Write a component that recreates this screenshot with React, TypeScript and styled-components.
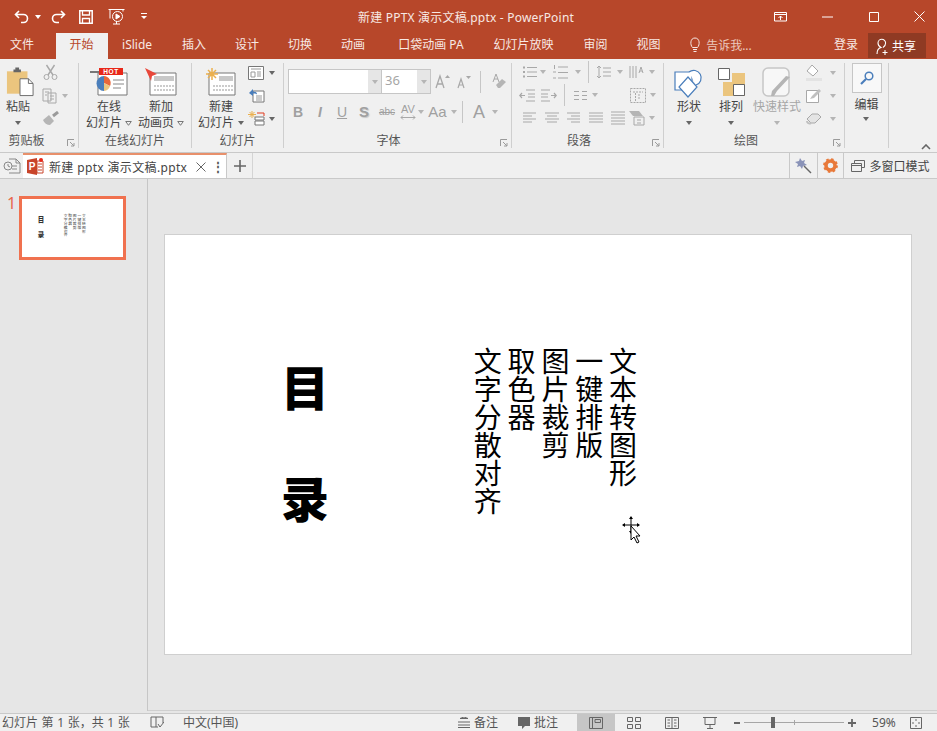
import React from "react";
import styled, { createGlobalStyle } from "styled-components";

const Global = createGlobalStyle`
  html, body { margin: 0; padding: 0; background: #e6e6e6; }
  body { font-family: "Noto Sans", "Noto Sans CJK SC", sans-serif; font-size: 12px; color: #444; overflow: hidden; }
  * { box-sizing: border-box; }
  svg { display: block; flex: none; }
`;

const Frame = styled.div`
  width: 937px; height: 731px; display: flex; flex-direction: column; overflow: hidden;
`;
const TitleBar = styled.div`
  height: 33px; background: #b7472a; display: flex; align-items: center; color: #fff; flex: none;
`;
const Qat = styled.div`
  width: 358px; display: flex; align-items: center; padding-left: 14px;
`;
const QatSlot = styled.div<{ $w: number }>`
  width: ${p => p.$w}px; display: flex; align-items: center;
`;
const DocTitle = styled.div`
  font-size: 12px; color: #f7e9e4; white-space: nowrap; letter-spacing: 0.2px;
`;
const WinControls = styled.div`
  margin-left: auto; display: flex; align-items: center; padding-right: 12px; gap: 35.5px;
`;
const TabBar = styled.div`
  height: 26px; background: #b7472a; display: flex; align-items: flex-start; flex: none; color: #f7e9e4;
`;
const Tab = styled.div<{ $active?: boolean; $first?: boolean; $ml?: number }>`
  height: 26px; line-height: 23px; white-space: nowrap;
  padding: ${p => (p.$active ? "0 14px 0 13.5px" : "0 14.5px")};
  margin-left: ${p => (p.$first ? "-4.5px" : p.$active ? "7.5px" : `${p.$ml ?? 0}px`)};
  background: ${p => (p.$active ? "#f0f0f0" : "transparent")};
  color: ${p => (p.$active ? "#b7472a" : "#f7e9e4")};
`;
const TellMe = styled.div`
  display: flex; align-items: center; gap: 5px; height: 23px; margin-left: 14px; color: #ecc9bd;
`;
const SignIn = styled.div`
  margin-left: auto; line-height: 23px; color: #f7e9e4;
`;
const Share = styled.div`
  width: 58px; height: 25px; margin: 0 11px 0 10px; background: #8f3a23; display: flex; align-items: center; gap: 2px; padding-left: 6px; color: #fff;
`;
const Ribbon = styled.div`
  height: 94px; background: #f0f0f0; border-bottom: 1px solid #c9c9c9; display: flex; flex: none; position: relative;
`;
const Group = styled.div<{ $w: number }>`
  width: ${p => p.$w}px; flex: none; margin: 4px 0; display: flex; flex-direction: column;
  border-right: 1px solid #cfcfcf; position: relative;
`;
const GroupBody = styled.div<{ $pl?: number }>`
  height: 72px; display: flex; padding-left: ${p => p.$pl ?? 0}px;
`;
const GroupLabel = styled.div<{ $pr?: number }>`
  flex: 1; text-align: center; line-height: 14px; padding-top: 1px; padding-right: ${p => p.$pr ?? 0}px; color: #555;
`;
const Launcher = styled.div`
  position: absolute; right: 3px; bottom: 1px;
`;
const Big = styled.div<{ $w: number; $off?: boolean }>`
  width: ${p => p.$w}px; flex: none; display: flex; flex-direction: column; align-items: center;
  color: ${p => (p.$off ? "#a6a6a6" : "#444")}; line-height: 16px; padding-top: 2px;
`;
const BigIcon = styled.div`
  height: 34px; display: flex; align-items: center; justify-content: center;
`;
const BigLine = styled.div`
  display: flex; align-items: center; gap: 3px; white-space: nowrap; height: 16px;
`;
const Caret = styled.span<{ $off?: boolean; $light?: boolean; $ml?: number }>`
  display: inline-block; width: 0; height: 0; flex: none; margin-left: ${p => p.$ml ?? 0}px;
  border-left: 3px solid transparent; border-right: 3px solid transparent;
  border-top: 4px solid ${p => (p.$light ? "#fff" : p.$off ? "#b5b5b5" : "#666")};
`;
const CaretRow = styled.div<{ $h?: number }>`
  height: ${p => p.$h ?? 16}px; display: flex; align-items: center; justify-content: center;
`;
const SmallCol = styled.div<{ $w: number }>`
  width: ${p => p.$w}px; flex: none; display: flex; flex-direction: column; gap: 4px;
`;
const SmallBtn = styled.div<{ $pl?: number }>`
  height: 19px; display: flex; align-items: center; gap: 4px; padding-left: ${p => p.$pl ?? 0}px;
`;
const RowStack = styled.div<{ $pl: number; $pt: number }>`
  height: 72px; display: flex; flex-direction: column; padding: ${p => p.$pt}px 0 0 ${p => p.$pl}px;
`;
const FontRow = styled.div<{ $h: number; $pt?: number }>`
  height: ${p => p.$h}px; display: flex; align-items: center; padding-top: ${p => p.$pt ?? 0}px;
`;
const Combo = styled.div<{ $w: number }>`
  width: ${p => p.$w}px; height: 23px; background: #fff; display: flex; justify-content: flex-end; color: #a6a6a6;
  font-size: 13px; line-height: 21px; padding-left: 3px;
`;
const ComboGroup = styled.div`
  display: flex; border: 1px solid #c6c6c6; background: #c6c6c6; gap: 1px;
`;
const ComboText = styled.span`
  flex: 1;
`;
const ComboArrow = styled.div`
  width: 13px; background: #e6e6e6; display: flex; align-items: center; justify-content: center;
`;
const Glyph = styled.div<{ $w: number; $size?: number; $b?: boolean; $i?: boolean; $u?: boolean; $shadow?: boolean }>`
  width: ${p => p.$w}px; text-align: center; color: #a0a0a0; flex: none; font-family: "Liberation Sans", sans-serif;
  font-size: ${p => p.$size ?? 13}px; font-weight: ${p => (p.$b ? 700 : 400)};
  font-style: ${p => (p.$i ? "italic" : "normal")}; text-decoration: ${p => (p.$u ? "underline" : "none")}; line-height: 16px;
  text-shadow: ${p => (p.$shadow ? "1px 1px 1px #c8c8c8" : "none")};
`;
const GlyphStack = styled.div`
  width: 20px; flex: none; display: flex; flex-direction: column; align-items: center; color: #a0a0a0;
  font: 400 11px/11px "Liberation Sans", sans-serif;
`;
const VSep = styled.div<{ $h: number; $mx: number }>`
  width: 1px; height: ${p => p.$h}px; background: #c6c6c6; margin: 0 ${p => p.$mx}px; flex: none;
`;
const Slot = styled.div<{ $w: number; $jc?: string }>`
  width: ${p => p.$w}px; flex: none; display: flex; align-items: center; justify-content: ${p => p.$jc ?? "flex-start"};
`;
const EditBtn = styled.div`
  width: 30px; height: 30px; background: #f8f8f8; border: 1px solid #c6c6c6; display: flex; align-items: center; justify-content: center;
`;
const EditCol = styled.div`
  width: 43px; display: flex; flex-direction: column; align-items: center; line-height: 16px; gap: 4px;
`;
const EditLabel = styled.div`
  display: flex; flex-direction: column; align-items: center;
`;
const Collapse = styled.div`
  flex: 1; display: flex; justify-content: flex-end; align-items: flex-end; padding: 0 6px 2px 0;
`;
const DocBar = styled.div`
  height: 26px; background: #f0f0f0; border-bottom: 1px solid #c9c9c9; display: flex; align-items: stretch; flex: none;
`;
const HistoryBtn = styled.div`
  width: 23px; display: flex; align-items: center; justify-content: center;
`;
const DocTab = styled.div`
  width: 204px; background: #fff; border-top: 2px solid #e8906b; border-right: 1px solid #c9c9c9; display: flex; align-items: center; padding-left: 4px; color: #444;
`;
const DocName = styled.span`
  margin-left: 5px; width: 141px; white-space: nowrap; letter-spacing: 0.35px;
`;
const DocClose = styled.span`
  width: 21px; display: flex; justify-content: center;
`;
const DocMore = styled.span`
  width: 14px; font-weight: 700; color: #555; text-align: center; line-height: 14px;
`;
const PlusBtn = styled.div`
  width: 26px; border-right: 1px solid #d4d4d4; display: flex; align-items: center; justify-content: center;
`;
const DocRight = styled.div`
  margin-left: auto; display: flex; align-items: stretch;
`;
const DocTool = styled.div<{ $w: number }>`
  width: ${p => p.$w}px; border-left: 1px solid #c9c9c9; display: flex; align-items: center; justify-content: center; gap: 4px; white-space: nowrap;
`;
const Main = styled.div`
  flex: none; height: 532px; display: flex;
`;
const SidePanel = styled.div`
  width: 148px; border-right: 1px solid #c6c6c6; padding: 17px 0 0 7px; display: flex;
`;
const ThumbNum = styled.div`
  width: 12px; color: #e8674a; font-size: 16px; line-height: 16px; margin-top: -1px;
`;
const Thumb = styled.div`
  width: 107px; height: 64px; border: 3px solid #f0714f; background: #fff; overflow: hidden;
`;
const Scaled = styled.div`
  width: 748px; height: 421px; transform: scale(0.135); transform-origin: 0 0; opacity: 0.8;
`;
const Canvas = styled.div`
  flex: 1; padding: 55px 0 0 16px; border-bottom: 1px solid #cfcfcf;
`;
const SlideBox = styled.div<{ $frame?: boolean }>`
  width: 748px; height: 421px; background: #fff; position: relative;
  border: ${p => (p.$frame ? "1px solid #cfcfcf" : "none")}; font-family: "Noto Sans CJK SC", sans-serif; color: #000;
`;
const Heading = styled.div`
  position: absolute; left: 116px; top: 126px; display: flex; flex-direction: column; gap: 63px;
  font-size: 48px; line-height: 48px; font-weight: 900;
`;
const VerticalText = styled.div`
  position: absolute; left: 305px; top: 112px; writing-mode: vertical-rl; font-size: 28px; line-height: 33.8px;
  white-space: pre-line;
`;
const Cursor = styled.div`
  position: absolute; left: 457px; top: 281px;
`;
const StatusGap = styled.div`
  height: 2px; flex: none;
`;
const StatusBar = styled.div`
  flex: 1; min-height: 0; background: #f0f0f0; border-top: 1px solid #c9c9c9; display: flex; align-items: center; color: #555;
  white-space: nowrap; padding-left: 2px; line-height: 14px;
`;
const StatusItem = styled.div<{ $w?: number; $ml?: number; $gap?: number }>`
  display: flex; align-items: center; gap: ${p => p.$gap ?? 4}px; height: 100%; margin-left: ${p => p.$ml ?? 0}px;
  ${p => (p.$w ? `width: ${p.$w}px;` : "")}
`;
const PageCount = styled.span`
  word-spacing: 0.5px;
`;
const ViewBtn = styled.div<{ $on?: boolean }>`
  width: 38px; height: 100%; display: flex; align-items: center; justify-content: center; background: ${p => (p.$on ? "#c6c6c6" : "transparent")};
`;
const Slider = styled.div`
  width: 100px; height: 1px; background: #a6a6a6; position: relative;
`;
const SliderTick = styled.div`
  position: absolute; left: 50px; top: -2px; width: 1px; height: 5px; background: #a6a6a6;
`;
const SliderThumb = styled.div`
  position: absolute; left: 27px; top: -5px; width: 4px; height: 11px; background: #666;
`;

const S = { fill: "none", stroke: "currentColor", strokeWidth: 1 } as const;
const G = "#a8a8a8";
const B = "#4a7ebb";

const Wh = ({ children, w, h, c = "#fff" }: { children: React.ReactNode; w: number; h: number; c?: string }) => (
  <svg width={w} height={h} viewBox={`0 0 ${w} ${h}`} style={{ color: c }} {...S}>{children}</svg>
);

const HollowCaret = () => (
  <Wh w={7} h={5} c="#777"><path d="M.7.500h5.600L3.500 4.300z" /></Wh>
);

const SlideContent = ({ frame }: { frame?: boolean }) => (
  <SlideBox $frame={frame}>
    <Heading><span>目</span><span>录</span></Heading>
    <VerticalText>{"文本转图形\n一键排版\n图片裁剪\n取色器\n文字分散对齐"}</VerticalText>
    {frame && (
      <Cursor>
        <svg width="24" height="30" viewBox="0 0 24 30">
          <path d="M9 1v16M1 9h16" stroke="#000" fill="none" />
          <path d="M9 0l2 3H7zM9 18l2-3H7zM0 9l3-2v4zM18 9l-3-2v4z" fill="#000" />
          <path d="M9 10v14l3-3 3 6 2-1-3-6h4z" fill="#fff" stroke="#000" />
        </svg>
      </Cursor>
    )}
  </SlideBox>
);

const Launch = () => (
  <Launcher>
    <Wh w={8} h={8} c="#9a9a9a"><path d="M.5 7V.5H7M3 3l4 4M7 4v3H4" /></Wh>
  </Launcher>
);

export default function App() {
  return (
    <Frame>
      <Global />
      <TitleBar>
        <Qat>
          <QatSlot $w={29}>
            <Wh w={16} h={14}><path d="M5 1L1.500 4.500 5 8M2 4.500h7.500a4 4 0 0 1 0 8H7" strokeWidth="1.600" /></Wh>
            <Caret $light $ml={5} />
          </QatSlot>
          <QatSlot $w={7} />
          <QatSlot $w={29}>
            <Wh w={16} h={14}><path d="M11 1l3.500 3.500L11 8M14 4.500H6.500a4 4 0 0 0 0 8H9" strokeWidth="1.600" /></Wh>
          </QatSlot>
          <QatSlot $w={29}>
            <Wh w={14} h={14}><path d="M.8.8h12.400v12.400H.8z" strokeWidth="1.500" /><path d="M3.500 1v4h7V1M3.500 13V8.500h7V13" strokeWidth="1.300" /></Wh>
          </QatSlot>
          <QatSlot $w={33}>
            <Wh w={17} h={17}><path d="M.5 1.500h16M2 1.500v9M15 1.500v2M5 16h7M8.500 13v3" /><circle cx="9.500" cy="8.500" r="5" /><path d="M8 6l4 2.500L8 11z" fill="#fff" /></Wh>
          </QatSlot>
          <QatSlot $w={10}>
            <Wh w={6} h={7}><path d="M0 .5h6" /><path d="M0 3l3 3 3-3z" fill="#fff" stroke="none" /></Wh>
          </QatSlot>
        </Qat>
        <DocTitle>新建 PPTX 演示文稿.pptx - PowerPoint</DocTitle>
        <WinControls>
          <Wh w={13} h={10}><path d="M.5.500h12v8.500H.5zM.5 2.500h12M6.500 8V4M4.500 6l2-2 2 2" /></Wh>
          <Wh w={11} h={2}><path d="M0 1h11" /></Wh>
          <Wh w={10} h={10}><path d="M.5.500h9v9h-9z" /></Wh>
          <Wh w={11} h={11}><path d="M.5.500l10 10M10.500.500l-10 10" /></Wh>
        </WinControls>
      </TitleBar>
      <TabBar>
        <Tab $first>文件</Tab>
        <Tab $active>开始</Tab>
        <Tab>iSlide</Tab>
        <Tab $ml={1}>插入</Tab>
        <Tab>设计</Tab>
        <Tab>切换</Tab>
        <Tab>动画</Tab>
        <Tab $ml={4}>口袋动画 PA</Tab>
        <Tab $ml={1}>幻灯片放映</Tab>
        <Tab $ml={1}>审阅</Tab>
        <Tab>视图</Tab>
        <TellMe>
          <Wh w={12} h={16} c="#f7e9e4"><path d="M3.500 10.500C1 8 1 1 6 1s5 7 2.500 9.500zM4 12.500h4M4.500 14.500h3" /></Wh>
          告诉我...
        </TellMe>
        <SignIn>登录</SignIn>
        <Share>
          <Wh w={16} h={18}><path d="M3 17c0-5 2-6 4-6.500C5 9.500 4 8 4 6a3.800 3.800 0 0 1 7.600 0c0 2-1 3.500-2.600 4.500M11 13v5M8.500 15.500h5" strokeWidth="1.100" /></Wh>
          共享
        </Share>
      </TabBar>
      <Ribbon>
        <Group $w={79}>
          <GroupBody $pl={3}>
            <Big $w={30}>
              <BigIcon>
                <svg width="28" height="31" viewBox="0 0 30 32" style={{ marginLeft: 3 }}>
                  <path d="M1 4h22v24H1z" fill="#ebc57e" />
                  <path d="M8 5V2h2V0h4v2h2v3z" fill="#666" />
                  <path d="M15 12h9l5 5v13H15z" fill="#fff" stroke="#666" />
                  <path d="M24 12v5h5" fill="none" stroke="#666" />
                </svg>
              </BigIcon>
              <BigLine>粘贴</BigLine>
              <CaretRow><Caret /></CaretRow>
            </Big>
            <SmallCol $w={45}>
              <SmallBtn $pl={10}>
                <Wh w={15} h={17} c={G}><circle cx="3.500" cy="13" r="2.500" /><circle cx="11.500" cy="13" r="2.500" /><path d="M5 11L11.500 1M10 11L3.500 1" strokeWidth="1.400" /></Wh>
              </SmallBtn>
              <SmallBtn $pl={9}>
                <Wh w={16} h={17} c={G}><path d="M1 2h8v12H1zM6 6h8v10H6zM3 5h4M3 8h2M8 9h4M8 12h4" /></Wh>
                <Caret $off />
              </SmallBtn>
              <SmallBtn $pl={9}>
                <svg width="17" height="15" viewBox="0 0 17 15"><path d="M1 9l6-5 5 6-4 4c-3 0-6-2-7-5z" fill="#b5b5b5" /><path d="M11 5l5-4" stroke="#9a9a9a" strokeWidth="3" /></svg>
              </SmallBtn>
            </SmallCol>
          </GroupBody>
          <GroupLabel $pr={25}>剪贴板</GroupLabel>
          <Launch />
        </Group>
        <Group $w={113}>
          <GroupBody $pl={4}>
            <Big $w={52}>
              <BigIcon>
                <svg width="38" height="28" viewBox="0 0 38 28">
                  <path d="M8 5h29v22H8z" fill="#fff" stroke="#777" />
                  <path d="M0 4h10" stroke="#777" strokeWidth="2" />
                  <path d="M14 8a7 7 0 1 0 0 15z" fill="#4a7ebb" /><path d="M14 8a7 7 0 0 1 6 10l-6-3z" fill="#e8673a" /><path d="M14 23a7 7 0 0 0 6-5l-6-3z" fill="#ebc57e" />
                  <path d="M23 12h11M23 16h11M23 20h8" stroke="#888" />
                  <path d="M9 0h24v7H9z" fill="#e8281a" />
                  <text x="21" y="6" fontSize="6.500" fontWeight="700" fill="#fff" textAnchor="middle" fontFamily="Liberation Sans" letterSpacing=".6">HOT</text>
                </svg>
              </BigIcon>
              <BigLine>在线</BigLine>
              <BigLine>幻灯片<HollowCaret /></BigLine>
            </Big>
            <Big $w={52}>
              <BigIcon>
                <svg width="32" height="28" viewBox="0 0 32 28">
                  <path d="M5 5h26v22H5z" fill="#fff" stroke="#777" />
                  <path d="M9 8h20v5H9z" fill="#c8c8c8" />
                  <path d="M9 18h20M9 22h20" stroke="#999" strokeDasharray="2 1" />
                  <path d="M0 0l12 6-5 2-1 5z" fill="#e8473a" />
                </svg>
              </BigIcon>
              <BigLine>新加</BigLine>
              <BigLine>动画页<HollowCaret /></BigLine>
            </Big>
          </GroupBody>
          <GroupLabel>在线幻灯片</GroupLabel>
        </Group>
        <Group $w={92}>
          <GroupBody $pl={2}>
            <Big $w={54}>
              <BigIcon>
                <svg width="30" height="28" viewBox="0 0 30 28">
                  <path d="M3 5h26v22H3z" fill="#fff" stroke="#777" />
                  <path d="M13 8h14v5H13z" fill="#c8c8c8" />
                  <path d="M7 18h20M7 22h20" stroke="#999" strokeDasharray="2 1" />
                  <path d="M6 0v12M0 6h12M2 2l8 8M10 2l-8 8" stroke="#ebb04e" strokeWidth="1.500" />
                </svg>
              </BigIcon>
              <BigLine>新建</BigLine>
              <BigLine>幻灯片<Caret $ml={1} /></BigLine>
            </Big>
            <SmallCol $w={32}>
              <SmallBtn>
                <svg width="17" height="14" viewBox="0 0 17 14"><path d="M.5.500h15v13H.5z" fill="#fff" stroke="#777" /><path d="M3 3h10M3 6h4v5H3zM9 6h4M9 8h4M9 10h4" stroke="#999" fill="none" /></svg>
                <Caret />
              </SmallBtn>
              <SmallBtn>
                <svg width="17" height="15" viewBox="0 0 17 15"><path d="M5 3h11v11H5z" fill="#fff" stroke="#777" /><path d="M8 8h6M8 10h6M8 12h6" stroke="#999" /><path d="M1 5l4-4v2.500c3 0 4 1 4 3-1-1-2-1-4-1V8z" fill="#4a7ebb" /></svg>
              </SmallBtn>
              <SmallBtn>
                <svg width="17" height="15" viewBox="0 0 17 15"><path d="M7 6h9v3H7zM7 10h9v4H7z" fill="#fff" stroke="#777" /><path d="M9 2h7v3" fill="none" stroke="#e03a1f" /><path d="M4 0v7M0 3.500h8M1.500 1l5 5M6.500 1l-5 5" stroke="#ebb04e" /></svg>
                <Caret />
              </SmallBtn>
            </SmallCol>
          </GroupBody>
          <GroupLabel>幻灯片</GroupLabel>
        </Group>
        <Group $w={228}>
          <RowStack $pl={4} $pt={7}>
            <FontRow $h={23}>
              <ComboGroup>
                <Combo $w={92}><ComboText /><ComboArrow><Caret $off /></ComboArrow></Combo>
                <Combo $w={48}><ComboText>36</ComboText><ComboArrow><Caret $off /></ComboArrow></Combo>
              </ComboGroup>
              <Slot $w={22} $jc="center"><Wh w={15} h={15} c={G}><path d="M1 14L5 2l4 12M2.500 10h5" strokeWidth="1.300" /><path d="M10 4l2.500-3L15 4z" fill={G} stroke="none" /></Wh></Slot>
              <Slot $w={22} $jc="center"><Wh w={14} h={14} c={G}><path d="M1 13l3-9 3 9M2 10h4" strokeWidth="1.200" /><path d="M9 1h5l-2.500 3z" fill={G} stroke="none" /></Wh></Slot>
              <VSep $h={22} $mx={5} />
              <Slot $w={24} $jc="center"><svg width="15" height="17" viewBox="0 0 15 17"><path d="M2 9L5 1l3 8M3 6h4" fill="none" stroke={G} /><path d="M5 12l6-6 4 3-6 6H7z" fill="#b5b5b5" /></svg></Slot>
            </FontRow>
            <FontRow $h={36} $pt={2}>
              <Glyph $w={20} $b $size={14}>B</Glyph>
              <Glyph $w={24} $i $b $size={14}>I</Glyph>
              <Glyph $w={20} $u $size={14}>U</Glyph>
              <Glyph $w={24} $b $shadow $size={15}>S</Glyph>
              <Glyph $w={22} $size={10}><s>abc</s></Glyph>
              <GlyphStack>
                AV
                <Wh w={16} h={5} c={G}><path d="M1 2.500h14M3 .5l-2 2 2 2M13 .5l2 2-2 2" /></Wh>
              </GlyphStack>
              <Caret $off />
              <Glyph $w={27} $size={15}>Aa</Glyph>
              <Caret $off />
              <VSep $h={22} $mx={5} />
              <Glyph $w={22} $size={18}>A</Glyph>
              <Slot $w={10} $jc="center"><Caret $off /></Slot>
            </FontRow>
          </RowStack>
          <GroupLabel $pr={18}>字体</GroupLabel>
          <Launch />
        </Group>
        <Group $w={152}>
          <RowStack $pl={7} $pt={0}>
            <FontRow $h={18}>
              <Slot $w={21} $jc="center"><Wh w={14} h={12} c={G}><path d="M4 1.500h10M4 6h10M4 10.500h10" /><path d="M0 1.500h2M0 6h2M0 10.500h2" strokeWidth="2" /></Wh></Slot>
              <Slot $w={13}><Caret $off /></Slot>
              <Slot $w={22}><Wh w={15} h={15} c={G}><path d="M5 2h10M5 7.500h10M5 13h10M1.500 0v4M0 7h3M0 13h3" /></Wh></Slot>
              <Slot $w={13}><Caret $off /></Slot>
              <VSep $h={22} $mx={0} />
              <Slot $w={22} $jc="flex-end"><Wh w={14} h={14} c={G}><path d="M2 1v12M0 3l2-2 2 2M0 11l2 2 2-2M6 3h8M6 7h8M6 11h8" /></Wh></Slot>
              <Slot $w={18} $jc="center"><Caret $off /></Slot>
              <Slot $w={15}><Wh w={15} h={14} c={G}><path d="M1 1v12M4 1v12M7 1v12M10 8l2-6 2 6M11 6h2" /></Wh></Slot>
              <Slot $w={11} $jc="flex-end"><Caret $off /></Slot>
            </FontRow>
            <FontRow $h={28}>
              <Slot $w={22}><Wh w={16} h={13} c={G}><path d="M7 1h9M9 5h7M9 8h7M7 12h9M6 6.500H1M3 4L.8 6.500 3 9" strokeWidth="1.200" /></Wh></Slot>
              <Slot $w={22}><Wh w={16} h={13} c={G}><path d="M0 1h9M0 5h7M0 8h7M0 12h9M10 6.500h5M13 4l2.200 2.500L13 9" strokeWidth="1.200" /></Wh></Slot>
              <VSep $h={22} $mx={1} />
              <Slot $w={21} $jc="flex-end"><Wh w={13} h={11} c={G}><path d="M0 1.500h5M8 1.500h5M0 5.500h5M8 5.500h5M0 9.500h5M8 9.500h5" /></Wh></Slot>
              <Slot $w={11} $jc="flex-end"><Caret $off /></Slot>
              <Slot $w={32} />
              <Slot $w={16}><Wh w={16} h={15} c={G}><path d="M.5.500h15v14H.5zM3 4h10M8 7h3M8 10h3M5.500 5v8" strokeDasharray="2 1" /></Wh></Slot>
              <Slot $w={10} $jc="flex-end"><Caret $off /></Slot>
            </FontRow>
            <FontRow $h={18}>
              {[
                "M0 2h13M0 5h9M0 8h13M0 11h9",
                "M0 2h14M2 5h10M0 8h14M2 11h10",
                "M0 2h13M4 5h9M0 8h13M4 11h9",
                "M0 2h14M0 5h14M0 8h14M0 11h14",
                "M0 1h14M0 4h14M0 7h14M0 10h14M0 13h14",
              ].map(d => (
                <Slot $w={22} $jc="center" key={d}><Wh w={14} h={14} c={G}><path d={d} /></Wh></Slot>
              ))}
              <Slot $w={16}><svg width="16" height="15" viewBox="0 0 16 15"><path d="M0 0h10l4 5H4z" fill="#b5b5b5" /><path d="M5 6h10v8H5zM8 9h4M8 12h4" fill="none" stroke={G} /></svg></Slot>
              <Slot $w={10} $jc="flex-end"><Caret $off /></Slot>
            </FontRow>
          </RowStack>
          <GroupLabel $pr={17}>段落</GroupLabel>
          <Launch />
        </Group>
        <Group $w={181}>
          <GroupBody>
            <Big $w={50}>
              <BigIcon>
                <svg width="30" height="31" viewBox="0 0 30 31">
                  <path d="M1 5h17v18H1z" fill="#fff" stroke={B} strokeWidth="1.200" />
                  <path d="M15 5a7.500 7.500 0 1 1 7 13" fill="#fff" stroke={B} strokeWidth="1.200" />
                  <path d="M14 10l9 10-9 10-9-10z" fill="#fff" stroke={B} strokeWidth="1.200" />
                </svg>
              </BigIcon>
              <BigLine>形状</BigLine>
              <CaretRow><Caret /></CaretRow>
            </Big>
            <Big $w={34}>
              <BigIcon>
                <svg width="27" height="28" viewBox="0 0 27 28">
                  <path d="M14 5h13v23H14z M5 14h22v14H5z" fill="#ebc57e" />
                  <path d="M.5.500h11v11H.5z" fill="#fff" stroke="#666" />
                  <path d="M15.500 16.500h11v11h-11z" fill="#fff" stroke="#666" />
                </svg>
              </BigIcon>
              <BigLine>排列</BigLine>
              <CaretRow><Caret /></CaretRow>
            </Big>
            <Big $w={58} $off>
              <BigIcon>
                <svg width="30" height="31" viewBox="0 0 30 31">
                  <rect x="1" y="1" width="26" height="28" rx="5" fill="#f7f7f7" stroke="#c6c6c6" strokeWidth="1.500" />
                  <path d="M28 10L15 24l-3 5h-3l1-5 14-15z" fill="#b5b5b5" />
                </svg>
              </BigIcon>
              <BigLine>快速样式</BigLine>
              <CaretRow><Caret $off /></CaretRow>
            </Big>
            <SmallCol $w={38}>
              <SmallBtn>
                <svg width="16" height="17" viewBox="0 0 16 17"><path d="M6 1l6 6-5 5-6-5z" fill="#fff" stroke={G} /><path d="M0 14h16v3H0z" fill="#e3e3e3" /></svg>
                <Caret $off $ml={4} />
              </SmallBtn>
              <SmallBtn>
                <svg width="16" height="15" viewBox="0 0 16 15"><path d="M.5 2.500h12v12H.5z" fill="#fff" stroke={G} /><path d="M4 11l2-3 7-7 2 2-7 7z" fill="#c0c0c0" /></svg>
                <Caret $off $ml={4} />
              </SmallBtn>
              <SmallBtn>
                <svg width="16" height="15" viewBox="0 0 16 15"><path d="M1 8l5-5h6l3 3-6 6H5z" fill="#e4e4e4" stroke={G} /><path d="M5 12c-2 1-4 0-4-2" fill="none" stroke="#c0c0c0" strokeWidth="2" /></svg>
                <Caret $off $ml={4} />
              </SmallBtn>
            </SmallCol>
          </GroupBody>
          <GroupLabel $pr={16}>绘图</GroupLabel>
          <Launch />
        </Group>
        <Group $w={44}>
          <EditCol>
            <EditBtn>
              <svg width="14" height="14" viewBox="0 0 14 14"><circle cx="9" cy="5" r="3.800" fill="none" stroke={B} strokeWidth="1.500" /><path d="M6 8l-5 5" stroke={B} strokeWidth="2.200" /></svg>
            </EditBtn>
            <EditLabel>
              <BigLine>编辑</BigLine>
              <CaretRow $h={12}><Caret /></CaretRow>
            </EditLabel>
          </EditCol>
        </Group>
        <Collapse>
          <Wh w={10} h={6} c="#666"><path d="M1 5l4-4 4 4" strokeWidth="1.600" /></Wh>
        </Collapse>
      </Ribbon>
      <DocBar>
        <HistoryBtn>
          <Wh w={18} h={16} c="#888"><path d="M6 1h7l4 4v10H6M13 1v4h4M9 8h5M9 11h5" /><circle cx="5" cy="8" r="4" fill="#f0f0f0" /><path d="M5 6v2l2 1" /></Wh>
        </HistoryBtn>
        <DocTab>
          <svg width="17" height="17" viewBox="0 0 17 17">
            <path d="M0 2l10-2v17L0 15z" fill="#c8442a" />
            <path d="M10 3h6v12h-6z" fill="#fff" stroke="#c8442a" />
            <path d="M11 6h4M11 9h4M11 12h4" stroke="#c8442a" />
            <circle cx="14" cy="2" r="2" fill="#e8281a" />
            <text x="5" y="12" fontSize="10" fontWeight="700" fill="#fff" textAnchor="middle" fontFamily="Liberation Sans">P</text>
          </svg>
          <DocName>新建 pptx 演示文稿.pptx</DocName>
          <DocClose><Wh w={10} h={10} c="#666"><path d="M.5.500l9 9M9.500.500l-9 9" /></Wh></DocClose>
          <DocMore>⋮</DocMore>
        </DocTab>
        <PlusBtn>
          <Wh w={12} h={12} c="#666"><path d="M6 0v12M0 6h12" strokeWidth="1.600" /></Wh>
        </PlusBtn>
        <DocRight>
          <DocTool $w={28}>
            <svg width="17" height="17" viewBox="0 0 17 17"><path d="M5 1l2 3 3-1-1 3 3 2-4 1-1 3-2-3-3 1 1-3-3-2 4-1z" fill="#8a93b8" /><path d="M9 9l7 7" stroke="#666" strokeWidth="1.400" /></svg>
          </DocTool>
          <DocTool $w={26}>
            <svg width="15" height="15" viewBox="0 0 15 15"><circle cx="7.500" cy="7.500" r="4.500" fill="none" stroke="#e8793a" strokeWidth="3.600" /><circle cx="7.500" cy="7.500" r="6.400" fill="none" stroke="#e8793a" strokeWidth="2" strokeDasharray="2.500 2.500" /></svg>
          </DocTool>
          <DocTool $w={94}>
            <Wh w={14} h={12} c="#666"><path d="M3.500 3V.5h10v7H11M.5 3.500h10v8H.5zM.5 5.500h10" /></Wh>
            多窗口模式
          </DocTool>
        </DocRight>
      </DocBar>
      <Main>
        <SidePanel>
          <ThumbNum>1</ThumbNum>
          <Thumb><Scaled><SlideContent /></Scaled></Thumb>
        </SidePanel>
        <Canvas><SlideContent frame /></Canvas>
      </Main>
      <StatusGap />
      <StatusBar>
        <StatusItem $w={148}><PageCount>幻灯片 第 1 张，共 1 张</PageCount></StatusItem>
        <StatusItem $w={33}>
          <Wh w={14} h={13} c="#666"><path d="M1 1h5v10H1zM6 1h7v6M6 11h2M8 8l2 3 4-5" /></Wh>
        </StatusItem>
        <StatusItem $w={275}>中文(中国)</StatusItem>
        <StatusItem>
          <Wh w={12} h={11} c="#666"><path d="M2 1.500L6 0l4 1.500zM0 5h12M0 8h12M0 10.500h12" /></Wh>
          备注
        </StatusItem>
        <StatusItem $ml={20}>
          <svg width="12" height="12" viewBox="0 0 12 12"><path d="M0 0h12v9H7l-3 3V9H0z" fill="#666" /></svg>
          批注
        </StatusItem>
        <StatusItem $ml={19} $gap={0}>
          <ViewBtn $on><Wh w={14} h={12} c="#666"><path d="M.5.500h13v11H.5zM3.500.500v11M6 2.500h5.500v3H6z" /></Wh></ViewBtn>
          <ViewBtn><Wh w={14} h={12} c="#666"><path d="M.5.500h5v4h-5zM8.500.500h5v4h-5zM.5 7.500h5v4h-5zM8.500 7.500h5v4h-5z" /></Wh></ViewBtn>
          <ViewBtn><Wh w={14} h={12} c="#666"><path d="M.5.500h13v11H.5zM7 .5v11M2.500 3h2.500M2.500 6h2.500M2.500 9h2.500M9 3h2.500M9 6h2.500M9 9h2.500" /></Wh></ViewBtn>
          <ViewBtn><Wh w={14} h={12} c="#666"><path d="M0 .5h14M2 .5v7h10v-7M7 7.500v4M4 11.500h6" /></Wh></ViewBtn>
        </StatusItem>
        <StatusItem $ml={5}>
          <Wh w={6} h={2} c="#666"><path d="M0 1h6" strokeWidth="2" /></Wh>
          <Slider><SliderTick /><SliderThumb /></Slider>
          <Wh w={8} h={8} c="#666"><path d="M4 0v8M0 4h8" strokeWidth="1.800" /></Wh>
        </StatusItem>
        <StatusItem $ml={16}>59%</StatusItem>
        <StatusItem $ml={14}>
          <Wh w={12} h={12} c="#666"><path d="M.5.500h11v11H.5zM6 2v2M6 8v2M2 6h2M8 6h2" /></Wh>
        </StatusItem>
      </StatusBar>
    </Frame>
  );
}
